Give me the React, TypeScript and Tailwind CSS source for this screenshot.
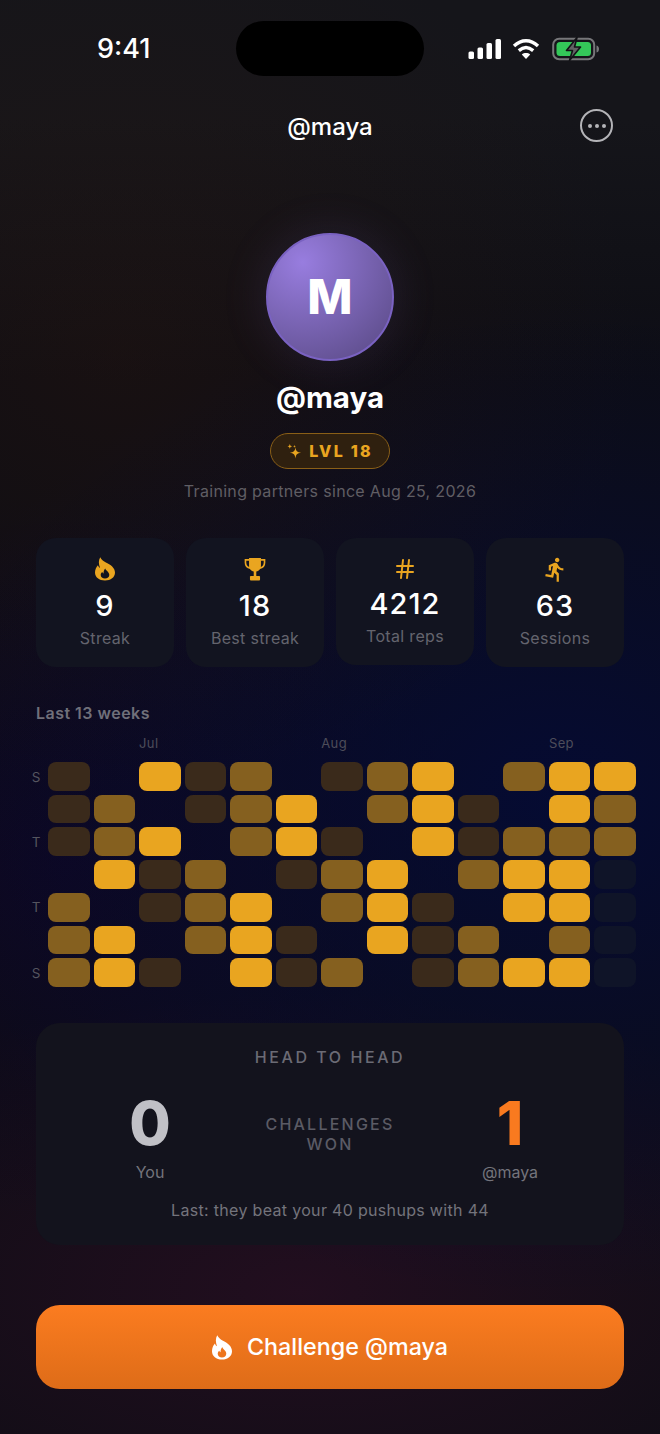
import { Hash } from "lucide-react";
import { MdDirectionsRun } from "react-icons/md";
import type { ReactNode } from "react";

// 0 = rest day, 1-3 = intensity, 4 = day still to come
const weeks = [
  [1, 0, 3, 1, 2, 0, 1, 2, 3, 0, 2, 3, 3],
  [1, 2, 0, 1, 2, 3, 0, 2, 3, 1, 0, 3, 2],
  [1, 2, 3, 0, 2, 3, 1, 0, 3, 1, 2, 2, 2],
  [0, 3, 1, 2, 0, 1, 2, 3, 0, 2, 3, 3, 4],
  [2, 0, 1, 2, 3, 0, 2, 3, 1, 0, 3, 3, 4],
  [2, 3, 0, 2, 3, 1, 0, 3, 1, 2, 0, 2, 4],
  [2, 3, 1, 0, 3, 1, 2, 0, 1, 2, 3, 3, 4],
];

const levelClass: Record<number, string> = {
  0: "",
  1: "bg-[#3a2a1b]",
  2: "bg-[#85601f]",
  3: "bg-[#e9a520]",
  4: "bg-[#0f1428]",
};

const dayLabels = ["S", "", "T", "", "T", "", "S"];

function Flame({ className, inner }: { className?: string; inner: string }) {
  return (
    <svg viewBox="1.5 0 21 30" preserveAspectRatio="none" className={className} fill="currentColor">
      <path d="M7 0.3C8.5 3.5 10 5 12.5 6.5C18 9.5 22.5 13.5 22.5 19.5C22.5 25.5 18 29.5 12 29.5C6 29.5 1.5 25.5 1.5 19.5C1.5 15.5 2.8 12.5 4.6 10.2C5 11.8 5.6 12.8 6.8 13.4C5.2 8.5 5 4.2 7 0.3Z" />
      <path
        fill={inner}
        d="M12.3 14.5C12.6 17 16.5 18.8 16.5 22.5C16.5 25.2 14.5 27 12 27C9.5 27 7.5 25.2 7.5 22.6C7.5 21 8.2 19.8 9.2 18.9C9.4 19.8 9.8 20.4 10.5 20.7C10.4 18.4 11 16.2 12.3 14.5Z"
      />
    </svg>
  );
}

function Trophy({ className }: { className?: string }) {
  return (
    <svg viewBox="0 0 24 26" className={className} fill="currentColor">
      <path d="M5.5 1H18.5V9.5C18.5 13.5 15.5 16 12 16C8.5 16 5.5 13.5 5.5 9.5Z" />
      <path
        d="M5.5 3H1.6V6C1.6 9.5 3.8 11.6 7 12M18.5 3H22.4V6C22.4 9.5 20.2 11.6 17 12"
        fill="none"
        stroke="currentColor"
        strokeWidth="1.8"
      />
      <rect x="10.6" y="15" width="2.8" height="6" />
      <rect x="6.5" y="20.5" width="11" height="5" rx="1" />
    </svg>
  );
}

function StatCard({
  icon,
  value,
  label,
  short,
}: {
  icon: ReactNode;
  value: string;
  label: string;
  short?: boolean;
}) {
  return (
    <div
      className={`flex flex-col items-center rounded-[20px] bg-[#121420] pt-[18px] ${
        short ? "h-[127px]" : "h-[129px]"
      }`}
    >
      <div className="flex h-[26px] items-center justify-center">{icon}</div>
      <div
        className={`text-[29px] font-medium leading-[36px] tracking-[0.035em] text-white ${
          short ? "mt-[4px]" : "mt-[6px]"
        }`}
      >
        {value}
      </div>
      <div className="mt-[4px] text-[16px] leading-[20px] tracking-[0.02em] text-[#64646e]">{label}</div>
    </div>
  );
}

function StatusBar() {
  return (
    <div className="relative h-[97px]">
      <div className="absolute left-[97px] top-[32px] text-[27px] font-medium leading-[34px] text-white">9:41</div>
      <div className="absolute left-[236px] top-[21px] h-[55px] w-[188px] rounded-[28px] bg-black" />
      <div className="absolute left-[468px] top-[37px] flex items-center">
        <svg width="34" height="22" viewBox="0 0 34 22" fill="white">
          <rect x="0.5" y="13.5" width="5.5" height="7.5" rx="1.5" />
          <rect x="9.5" y="9.5" width="5.5" height="11.5" rx="1.5" />
          <rect x="18.5" y="5" width="5.5" height="16" rx="1.5" />
          <rect x="27.5" y="1" width="5.5" height="20" rx="1.5" />
        </svg>
        <svg className="ml-[10px]" width="28" height="22" viewBox="0 0 28 22" fill="none" stroke="white">
          <path d="M2 8C9.5 1 18.5 1 26 8" strokeWidth="3.4" />
          <path d="M6.8 12.6C11.5 8.6 16.5 8.6 21.2 12.6" strokeWidth="3.4" />
          <path d="M14 21L9.8 16.5C12.2 14.6 15.8 14.6 18.2 16.5Z" fill="white" stroke="none" />
        </svg>
        <svg className="ml-[12px]" width="48" height="24" viewBox="0 0 48 24" fill="none">
          <rect x="1.2" y="1.8" width="41" height="20.4" rx="6" stroke="#77777a" strokeWidth="2" />
          <rect x="4.5" y="5" width="34.5" height="14" rx="3.5" fill="#34c759" />
          <path d="M44.5 8.5C46.5 9 47 10.5 47 12C47 13.5 46.5 15 44.5 15.5Z" fill="#77777a" />
          <path
            d="M25 0.5L14.5 13.5H20.5L17.5 23.5L28.5 10H22.5Z"
            fill="#626264"
            stroke="#121216"
            strokeWidth="1.6"
            strokeLinejoin="round"
          />
        </svg>
      </div>
    </div>
  );
}

export default function App() {
  return (
    <div
      className="h-[1434px] w-full overflow-hidden bg-[#0d0d14] font-['Inter',sans-serif] bg-[radial-gradient(520px_440px_at_120px_350px,rgba(60,28,10,0.24),transparent),radial-gradient(660px_500px_at_560px_800px,rgba(3,10,58,0.8),transparent),radial-gradient(420px_360px_at_60px_860px,rgba(14,4,42,0.6),transparent),radial-gradient(620px_300px_at_300px_1290px,rgba(78,16,54,0.32),transparent),linear-gradient(to_bottom,#15151a,#15151a_120px,transparent_380px)]"
    >
      <StatusBar />

      <header className="relative flex h-[60px] items-center justify-center">
        <div className="text-[24px] font-medium leading-[30px] text-white">@maya</div>
        <div className="absolute right-[47px] top-[12px] flex h-[33px] w-[33px] items-center justify-center gap-[3px] rounded-full border-[2.5px] border-[#b4b4b8]">
          <span className="h-[4px] w-[4px] rounded-full bg-[#b4b4b8]" />
          <span className="h-[4px] w-[4px] rounded-full bg-[#b4b4b8]" />
          <span className="h-[4px] w-[4px] rounded-full bg-[#b4b4b8]" />
        </div>
      </header>

      <section className="mt-[76px] flex flex-col items-center">
        <div className="flex h-[128px] w-[128px] items-center justify-center rounded-full border-2 border-[#7a62c2] bg-[radial-gradient(circle_at_28%_22%,#987ddf,#5a4a86_95%)] text-[48px] font-extrabold leading-none text-white shadow-[0_0_48px_rgba(140,110,220,0.14)]">
          M
        </div>
        <div className="mt-[16px] text-[29.5px] font-bold leading-[40px] text-white">@maya</div>
        <div className="mt-[16px] flex h-[36px] w-[120px] items-center justify-center gap-[7px] rounded-full border border-[#8a5f17] bg-[#2f200f] text-[16px] font-extrabold tracking-[0.14em] text-[#e9a520]">
          <svg width="15" height="16" viewBox="0 0 16 16" fill="currentColor">
            <path d="M9 4C9.5 8 10.8 9.4 15 9.8C10.8 10.2 9.5 11.6 9 16C8.5 11.6 7.2 10.2 3 9.8C7.2 9.4 8.5 8 9 4Z" />
            <path d="M3 0.5L3.7 2.3L5.5 3L3.7 3.7L3 5.5L2.3 3.7L0.5 3L2.3 2.3Z" />
            <path d="M8 1.5L8.4 2.6L9.5 3L8.4 3.4L8 4.5L7.6 3.4L6.5 3L7.6 2.6Z" />
          </svg>
          LVL 18
        </div>
        <div className="mt-[11px] text-[16px] leading-[22px] tracking-[0.02em] text-[#605e64]">
          Training partners since Aug 25, 2026
        </div>
      </section>

      <section className="mt-[36px] grid grid-cols-4 items-start gap-3 px-[36px]">
        <StatCard icon={<Flame className="h-[24px] w-[20px] text-[#e9a520]" inner="#121420" />} value="9" label="Streak" />
        <StatCard icon={<Trophy className="h-[24px] w-[22px] text-[#e9a520]" />} value="18" label="Best streak" />
        <StatCard icon={<Hash className="text-[#e9a520]" size={24} strokeWidth={2} />} value="4212" label="Total reps" short />
        <StatCard icon={<MdDirectionsRun className="text-[#e9a520]" size={27} />} value="63" label="Sessions" />
      </section>

      <section className="mt-[34px] pl-[30px] pr-[24px]">
        <div className="pl-[6px] text-[16px] font-semibold leading-[24px] tracking-[0.03em] text-[#70707a]">
          Last 13 weeks
        </div>
        <div className="ml-[18px] mt-[8px] grid h-[20px] grid-cols-13 gap-x-[4px] text-[13px] leading-[20px] tracking-[0.03em] text-[#4d4d5a]">
          <span className="col-start-3">Jul</span>
          <span className="col-start-7">Aug</span>
          <span className="col-start-12">Sep</span>
        </div>
        <div className="mt-[9px] flex gap-[6px]">
          <div className="grid h-[225px] w-[12px] grid-rows-7 gap-y-[4px] pt-[1px] text-[13.5px] text-[#55555f]">
            {dayLabels.map((day, i) => (
              <span key={i} className="flex items-center justify-center">
                {day}
              </span>
            ))}
          </div>
          <div className="grid h-[225px] flex-1 grid-cols-13 grid-rows-7 gap-[4px]">
            {weeks.flat().map((level, i) => (
              <div key={i} className={`rounded-[8px] ${levelClass[level]}`} />
            ))}
          </div>
        </div>
      </section>

      <section className="mx-[36px] mt-[36px] h-[222px] rounded-[24px] bg-[#13131d] pt-[22px]">
        <div className="text-center text-[16px] font-medium leading-[24px] tracking-[0.16em] text-[#6b6b75]">
          HEAD TO HEAD
        </div>
        <div className="mt-[18px] grid grid-cols-[228px_132px_228px] items-start">
          <div className="flex flex-col items-center">
            <div className="text-[60px] font-extrabold leading-[72px] text-[#c0c0c6]">0</div>
            <div className="mt-[1px] text-[16px] leading-[24px] text-[#74747c]">You</div>
          </div>
          <div className="mt-[27px] text-center text-[16px] font-medium leading-[20px] tracking-[0.14em] text-[#5b5b65]">
            CHALLENGES WON
          </div>
          <div className="flex flex-col items-center">
            <div className="text-[60px] font-extrabold leading-[72px] text-[#f97a1f]">1</div>
            <div className="mt-[1px] text-[16px] leading-[24px] text-[#74747c]">@maya</div>
          </div>
        </div>
        <div className="mt-[14px] text-center text-[16px] leading-[24px] tracking-[0.02em] text-[#74747c]">
          Last: they beat your 40 pushups with 44
        </div>
      </section>

      <button
        type="button"
        className="mx-[36px] mt-[60px] flex h-[84px] w-[588px] items-center justify-center gap-[15px] rounded-[24px] bg-gradient-to-b from-[#fb7c20] to-[#de6c18] text-[23.3px] font-medium text-white"
      >
        <Flame className="h-[25px] w-[20px] text-white" inner="#ee751c" />
        Challenge @maya
      </button>
    </div>
  );
}
